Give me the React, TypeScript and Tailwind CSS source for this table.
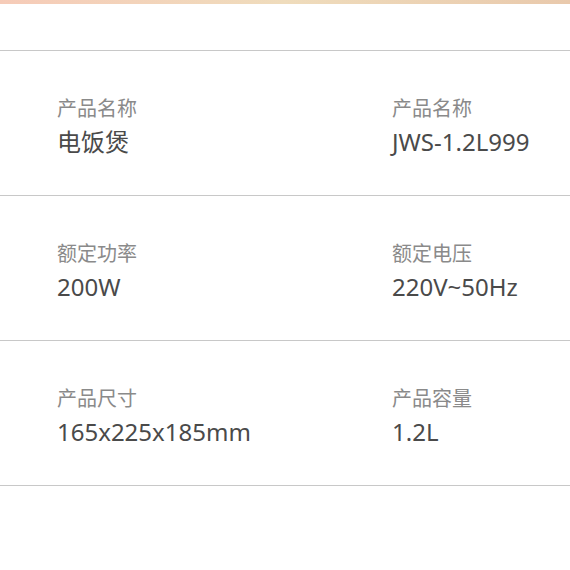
const specs = [
  [
    { label: "产品名称", value: "电饭煲" },
    { label: "产品名称", value: "JWS-1.2L999" },
  ],
  [
    { label: "额定功率", value: "200W" },
    { label: "额定电压", value: "220V~50Hz" },
  ],
  [
    { label: "产品尺寸", value: "165x225x185mm" },
    { label: "产品容量", value: "1.2L" },
  ],
];

export default function App() {
  return (
    <div
      className="w-[570px] h-[570px] bg-white overflow-hidden"
      style={{ fontFamily: '"Noto Sans", "Noto Sans CJK SC", sans-serif' }}
    >
      <div className="h-[4px] bg-gradient-to-r from-[#f6cbb8] via-[#efdcbc] to-[#e9c9ac]" />
      <div className="h-[46px]" />
      <div className="border-t border-[#c8c8c8]">
        {specs.map((row, i) => (
          <div key={i} className="h-[145px] border-b border-[#c8c8c8] flex pt-[45px]">
            {row.map((cell, j) => (
              <div key={j} className={j === 0 ? "w-[392px] pl-[57px]" : "flex-1"}>
                <div className="text-[20px] leading-[26px] text-[#8a8a8a]">{cell.label}</div>
                <div className="mt-[4px] text-[24px] leading-[32px] text-[#4a4a4a]">{cell.value}</div>
              </div>
            ))}
          </div>
        ))}
      </div>
    </div>
  );
}
